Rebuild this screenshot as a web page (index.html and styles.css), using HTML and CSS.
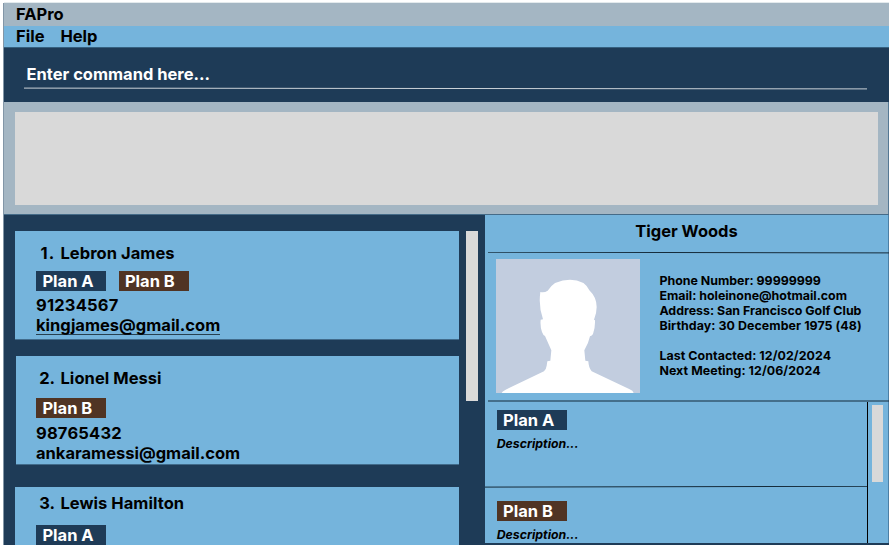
FILE: index.html
```html
<!DOCTYPE html>
<html lang="en">
<head>
<meta charset="utf-8">
<title>FAPro</title>
<link rel="stylesheet" href="styles.css">
</head>
<body>
<div class="window">
  <header class="titlebar">FAPro</header>
  <nav class="menubar"><span>File</span><span>Help</span></nav>
  <section class="command">
    <div class="prompt">Enter command here...</div>
    <svg class="prompt-line" viewBox="0 0 843 3"><path d="M0 1.1L843 1.9"/></svg>
  </section>
  <section class="result"><div class="result-box"></div></section>
  <main class="main">
    <section class="clients">
      <div class="cards">
        <article class="card card-first">
          <h2 class="name"><span class="num num-one">1.</span>Lebron James</h2>
          <div class="tags"><span class="tag">Plan A</span><span class="tag brown">Plan B</span></div>
          <div class="info phone">91234567</div>
          <div class="info"><span class="linked">kingjames@gmail.com</span></div>
        </article>
        <article class="card card-second">
          <h2 class="name"><span class="num">2.</span>Lionel Messi</h2>
          <div class="tags"><span class="tag brown">Plan B</span></div>
          <div class="info phone">98765432</div>
          <div class="info">ankaramessi@gmail.com</div>
        </article>
        <article class="card card-third">
          <h2 class="name"><span class="num">3.</span>Lewis Hamilton</h2>
          <div class="tags"><span class="tag">Plan A</span></div>
        </article>
      </div>
      <div class="scroll-thumb"></div>
    </section>
    <section class="detail">
      <h1 class="detail-name">Tiger Woods</h1>
      <svg class="rule" viewBox="0 0 401 2"><path d="M0 .2L401 .9"/></svg>
      <div class="profile">
        <svg class="photo" viewBox="170 177 432 402" preserveAspectRatio="none">
          <rect class="photo-bg" x="170" y="177" width="432" height="402"/>
          <path class="photo-figure" d="M187 579Q188 575 199 569L314 514Q321 506 322 497L324 484L333 482L336 451L317 408Q312 407 308 396Q302 380 304 359L311 358Q297 319 303 276Q315 279 325 272Q345 239 392 239Q437 240 450 271Q472 292 472 321Q472 340 464 359L467 361Q468 382 461 402Q458 408 452 409Q448 429 435 451L438 482L447 484Q448 504 457 514L571 568Q581 572 583 579Z"/>
        </svg>
        <div class="facts">
          <p>Phone Number: 99999999</p>
          <p>Email: holeinone@hotmail.com</p>
          <p>Address: San Francisco Golf Club</p>
          <p class="dated">Birthday: 30 December 1975 (48)</p>
          <p class="gap dated">Last Contacted: 12/02/2024</p>
          <p class="dated">Next Meeting: 12/06/2024</p>
        </div>
      </div>
      <svg class="rule" viewBox="0 0 401 2"><path d="M0 1H401"/></svg>
      <div class="plans">
        <div class="plan-list">
          <div class="plan plan-a"><span class="tag">Plan A</span><p class="desc">Description...</p></div>
          <svg class="plan-rule" viewBox="0 0 382 2"><path d="M0 1.1L382 .3"/></svg>
          <div class="plan plan-b"><span class="tag brown">Plan B</span><p class="desc">Description...</p></div>
        </div>
        <div class="plan-scroll"><div class="plan-thumb"></div></div>
      </div>
    </section>
  </main>
</div>
</body>
</html>
```

FILE: styles.css
```css
* { box-sizing: border-box; }
body {
  margin: 0;
  padding: 3px 3px 0 4px;
  height: 547px;
  overflow: hidden;
  background: #fff;
  color: #000;
  font: 700 16.5px/20px Inter, sans-serif;
}
h1, h2, p { margin: 0; font: inherit; }
svg { display: block; flex: none; }
.window {
  display: flex;
  flex-direction: column;
  height: 541.5px;
  overflow: hidden;
  background: #1e3b57;
  box-shadow: -1px 0 #8296a7, 0 -1px #e3eaed;
}
.titlebar { height: 23px; padding: 1px 12px; background: #a4b6c3; }
.menubar { display: flex; gap: 16px; height: 21px; padding: 0 12px; background: #75b4dc; }
.command { height: 55px; padding: 16px 20px 0; border-top: 1px solid #35607f; }
.prompt { padding-left: 2.5px; height: 23px; color: #fff; }
.prompt-line { width: 843px; height: 3px; fill: none; stroke: #cbd2d8; }
.result {
  height: 112px;
  padding: 10px 10px 9px 11px;
  background: #a4b6c3;
  border-right: 1px solid #547894;
  flex: none;
}
.result-box { height: 93px; background: #d9d9d9; }
.main { display: flex; height: 331px; border-top: 1px solid #456b88; }
.clients { display: flex; width: 481px; padding: 16px 7px 0 11px; gap: 7px; }
.cards { width: 444px; }
.card { padding-left: 21px; background: #75b4dc; border-bottom: 1px solid #416b8b; }
.card-first { height: 109px; padding-top: 12px; margin-bottom: 16px; }
.card-second { height: 109px; padding: 12px 0 0 20px; margin: 0 0 22px 1px; }
.card-third { height: 70px; padding-top: 6px; }
.name { display: flex; letter-spacing: .05px; }
.num { width: 19.2px; margin-right: 5.3px; text-align: right; }
.num-one { letter-spacing: 1px; }
.tags { display: flex; gap: 12.5px; padding: 8px 0 4px; }
.card-second .tags { padding: 10px 0 5px; }
.card-third .tags { padding-top: 12px; }
.tag {
  display: block;
  width: 70px;
  height: 20px;
  padding-left: 6.4px;
  background: #1e3b57;
  color: #fff;
}
.brown { background: #503424; }
.phone { letter-spacing: .2px; }
.linked { display: inline-block; height: 20px; border-bottom: 1px solid #26404f; }
.scroll-thumb { width: 12px; height: 170px; background: #d9d9d9; }
.detail { width: 404px; height: 328px; background: #75b4dc; border-right: 1px solid #4c7fa5; }
.detail-name { height: 37px; padding-top: 6px; text-align: center; }
.rule { width: 401px; height: 2px; margin-left: 3px; fill: none; stroke: #152b3a; }
.profile { display: flex; height: 146px; padding: 5px 0 0 11.4px; gap: 19px; }
.photo { width: 144px; height: 134px; }
.photo-bg { fill: #c2cddf; }
.photo-figure { fill: #fff; }
.facts { padding-top: 14px; font-size: 12.4px; line-height: 15px; white-space: nowrap; }
.dated { letter-spacing: .07px; }
.gap { margin-top: 15px; }
.plans { display: flex; height: 141px; }
.plan-list { width: 382px; }
.plan { padding-left: 11.7px; }
.plan-a { height: 84px; padding-top: 8px; }
.plan-b { padding-top: 13px; }
.plan-rule { width: 382px; height: 2px; fill: none; stroke: #152b3a; }
.desc { padding-top: 6px; font-size: 12.3px; line-height: 15px; font-style: italic; }
.plan-scroll { flex: 1; padding: 3px 0 0 4px; border-left: 1px solid #000; }
.plan-thumb { width: 11px; height: 77px; background: #d9d9d9; }
```
